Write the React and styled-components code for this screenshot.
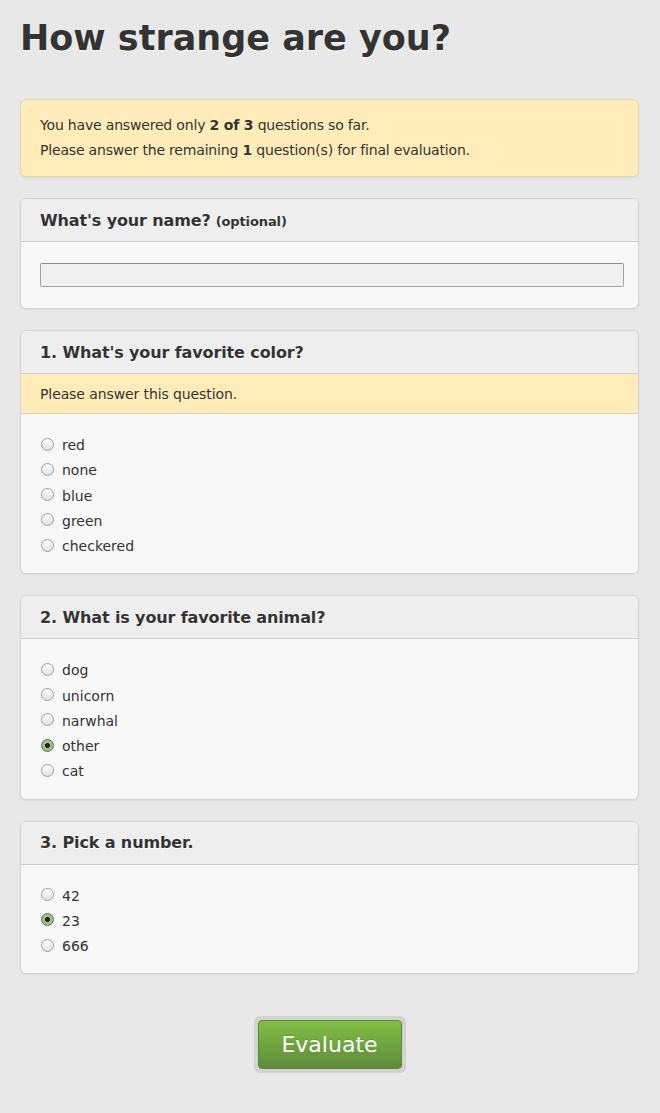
import React from "react";
import styled, { createGlobalStyle } from "styled-components";

const Global = createGlobalStyle`
  html, body { margin: 0; padding: 0; background: #e8e8e8; }
  body { font-family: "DejaVu Sans", Verdana, sans-serif; color: #333; font-size: 14px; }
  * { box-sizing: border-box; }
`;

const Page = styled.div`
  padding: 0 21px 41px 20px;
  display: flex;
  flex-direction: column;
`;

const Title = styled.h1`
  margin: 17px 0 40px;
  font-size: 35px;
  line-height: 42px;
  font-weight: bold;
  color: #333;
  text-shadow: 0 1px 1px #fff;
`;

const Alert = styled.div`
  background: #ffecb9;
  border: 1px solid #e2d6ad;
  border-radius: 6px;
  padding: 13px 19px 13px;
  line-height: 25px;
  letter-spacing: -0.18px;
  box-shadow: 0 1px 2px rgba(0, 0, 0, 0.06);
  margin-bottom: 21px;
`;

const Line = styled.div``;

const Panel = styled.section`
  background: #f8f8f8;
  border: 1px solid #d3d3d3;
  border-radius: 6px;
  overflow: hidden;
  box-shadow: 0 1px 2px rgba(0, 0, 0, 0.06);
  margin-bottom: 21px;
`;

const Header = styled.h2`
  margin: 0;
  height: 43px;
  display: flex;
  align-items: center;
  padding: 0 19px;
  background: #eeeeee;
  border-bottom: 1px solid #cfcfcf;
  font-size: 16px;
  font-weight: bold;
  letter-spacing: -0.12px;
  color: #333;
  text-shadow: 0 1px 0 #fff;
`;

const Small = styled.span`
  font-size: 13px;
  margin-left: 5px;
  margin-top: 2px;
`;

const Warning = styled.div`
  background: #ffecb9;
  border-bottom: 1px solid #d9d0b2;
  height: 40px;
  display: flex;
  align-items: center;
  padding: 0 19px;
  letter-spacing: -0.1px;
`;

const Body = styled.div`
  padding: ${(p) => p.$pad || "19px 19px 14px"};
  display: flex;
  flex-direction: column;
`;

const TextInput = styled.input`
  display: block;
  width: 100%;
  height: 24px;
  background: #f0f0f0;
  border: 1px solid #a2a2a2;
  border-top-color: #8d8d8d;
  border-radius: 2px;
  font: inherit;
  padding: 0 4px;
  outline: none;
`;

const Option = styled.label`
  display: flex;
  align-items: center;
  line-height: 25.25px;
  height: 25.25px;
  cursor: pointer;
`;

const Radio = styled.input`
  appearance: none;
  -webkit-appearance: none;
  width: 13px;
  height: 13px;
  margin: -3px 8px 0 1px;
  border-radius: 50%;
  border: 1px solid #9a9a9a;
  background: linear-gradient(#ffffff, #e2e2e2);
  position: relative;
  flex: none;
  &:checked {
    border-color: #5f7351;
    background: radial-gradient(circle, #1e2a16 0 2.2px, #a8c393 2.8px, #8fae78 100%);
  }
`;

const Actions = styled.div`
  display: flex;
  justify-content: center;
  margin-top: 21px;
`;

const ButtonRing = styled.div`
  padding: 4px;
  background: #d2d2d2;
  border-radius: 6px;
`;

const Button = styled.button`
  display: block;
  width: 144px;
  height: 49px;
  border: 1px solid #5b8a3a;
  border-radius: 4px;
  background: linear-gradient(#82bf44, #5e8b3b);
  color: #fff;
  font-family: "DejaVu Sans", sans-serif;
  font-size: 22px;
  text-shadow: 0 -1px 0 rgba(0, 0, 0, 0.15);
  cursor: pointer;
  padding: 0;
`;

const questions = [
  {
    id: "color",
    title: "1. What's your favorite color?",
    warn: true,
    options: ["red", "none", "blue", "green", "checkered"],
    checked: null,
  },
  {
    id: "animal",
    title: "2. What is your favorite animal?",
    options: ["dog", "unicorn", "narwhal", "other", "cat"],
    checked: "other",
  },
  {
    id: "number",
    title: "3. Pick a number.",
    options: ["42", "23", "666"],
    checked: "23",
  },
];

export default function App() {
  return (
    <>
      <Global />
      <Page>
        <Title>How strange are you?</Title>
        <Alert>
          <Line>
            You have answered only <b>2 of 3</b> questions so far.
          </Line>
          <Line>
            Please answer the remaining <b>1</b> question(s) for final evaluation.
          </Line>
        </Alert>

        <Panel>
          <Header>
            What's your name?<Small>(optional)</Small>
          </Header>
          <Body $pad="21px 14px 21px 19px">
            <TextInput type="text" />
          </Body>
        </Panel>

        {questions.map((q) => (
          <Panel key={q.id}>
            <Header>{q.title}</Header>
            {q.warn && <Warning>Please answer this question.</Warning>}
            <Body>
              {q.options.map((o) => (
                <Option key={o}>
                  <Radio type="radio" name={q.id} defaultChecked={q.checked === o} />
                  {o}
                </Option>
              ))}
            </Body>
          </Panel>
        ))}

        <Actions>
          <ButtonRing>
            <Button>Evaluate</Button>
          </ButtonRing>
        </Actions>
      </Page>
    </>
  );
}
